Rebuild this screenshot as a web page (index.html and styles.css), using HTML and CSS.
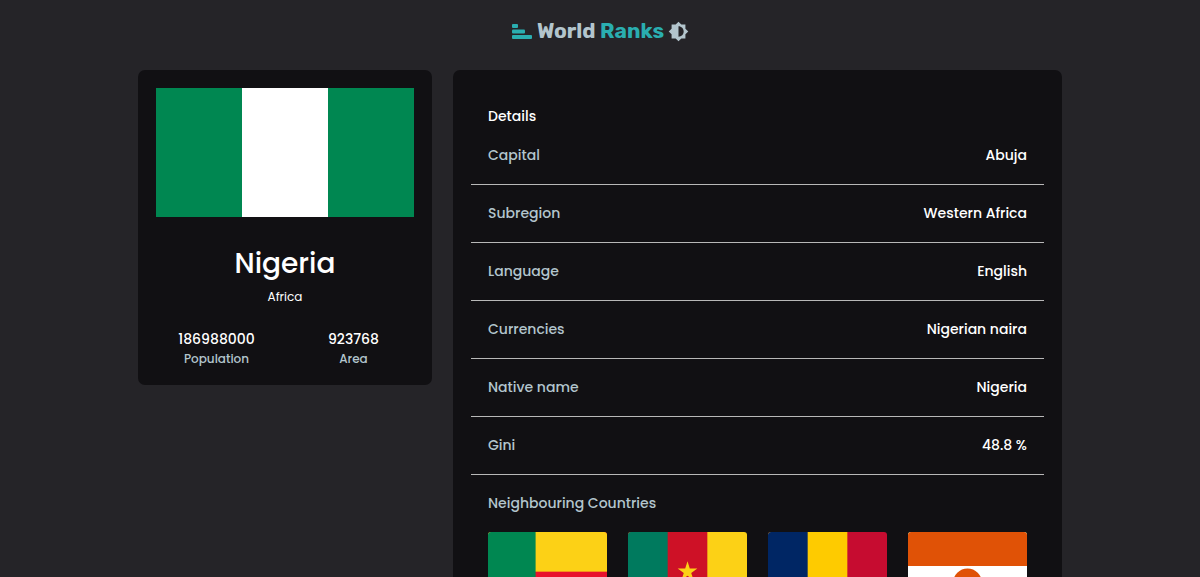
FILE: index.html
```html
<!DOCTYPE html>
<html lang="en">
<head>
<meta charset="utf-8">
<meta name="viewport" content="width=device-width, initial-scale=1">
<title>World Ranks - Nigeria</title>
<link rel="stylesheet" href="styles.css">
</head>
<body>
<header class="header">
  <a class="brand" href="#">
    <svg class="brand-icon" viewBox="0 0 20 15" aria-hidden="true"><rect width="6" height="4" rx="1"/><rect y="5.5" width="13" height="4" rx="1"/><rect y="11" width="20" height="4" rx="1"/></svg>
    <span class="brand-name">World <span class="brand-accent">Ranks</span></span>
  </a>
  <button class="theme-toggle" type="button" aria-label="Toggle theme">
    <svg viewBox="1 1 22 22" aria-hidden="true"><path d="M20 15.31L23.31 12 20 8.69V4h-4.69L12 .69 8.69 4H4v4.69L.69 12 4 15.31V20h4.69L12 23.31 15.31 20H20v-4.69zM12 18V6c3.31 0 6 2.69 6 6s-2.69 6-6 6z"/></svg>
  </button>
</header>
<main class="layout">
  <section class="card overview">
    <svg class="flag" viewBox="0 0 6 3" role="img" aria-label="Flag of Nigeria"><rect width="6" height="3" fill="#008751"/><rect x="2" width="2" height="3" fill="#fff"/></svg>
    <h1 class="country">Nigeria</h1>
    <p class="region">Africa</p>
    <dl class="stats">
      <div class="stat"><dd class="stat-value">186988000</dd><dt class="stat-label">Population</dt></div>
      <div class="stat"><dd class="stat-value">923768</dd><dt class="stat-label">Area</dt></div>
    </dl>
  </section>
  <section class="card details">
    <h2 class="details-title">Details</h2>
    <dl class="rows">
      <div class="row"><dt>Capital</dt><dd>Abuja</dd></div>
      <div class="row"><dt>Subregion</dt><dd>Western Africa</dd></div>
      <div class="row"><dt>Language</dt><dd>English</dd></div>
      <div class="row"><dt>Currencies</dt><dd>Nigerian naira</dd></div>
      <div class="row"><dt>Native name</dt><dd>Nigeria</dd></div>
      <div class="row"><dt>Gini</dt><dd>48.8 %</dd></div>
    </dl>
    <div class="neighbours">
      <h3 class="neighbours-title">Neighbouring Countries</h3>
      <div class="neighbour-grid">
        <svg class="neighbour-flag" viewBox="0 0 150 100" role="img" aria-label="Flag of Benin"><rect width="150" height="100" fill="#e8112d"/><rect width="150" height="50" fill="#fcd116"/><rect width="60" height="100" fill="#008751"/></svg>
        <svg class="neighbour-flag" viewBox="0 0 150 100" role="img" aria-label="Flag of Cameroon"><rect width="150" height="100" fill="#fcd116"/><rect width="100" height="100" fill="#ce1126"/><rect width="50" height="100" fill="#007a5e"/><path fill="#fcd116" d="M75 37l2.900 9h9.500l-7.700 5.600 2.900 9-7.600-5.600-7.600 5.600 2.900-9-7.700-5.600h9.500z"/></svg>
        <svg class="neighbour-flag" viewBox="0 0 150 100" role="img" aria-label="Flag of Chad"><rect width="150" height="100" fill="#c60c30"/><rect width="100" height="100" fill="#fecb00"/><rect width="50" height="100" fill="#002664"/></svg>
        <svg class="neighbour-flag" viewBox="0 0 70 60" role="img" aria-label="Flag of Niger"><rect width="70" height="60" fill="#0db02b"/><rect width="70" height="40" fill="#fff"/><rect width="70" height="20" fill="#e05206"/><circle cx="35" cy="30" r="8.500" fill="#e05206"/></svg>
      </div>
    </div>
  </section>
</main>
</body>
</html>
```
FILE: styles.css
```css
* {
  box-sizing: border-box;
  margin: 0;
}

body {
  background: #252428;
  color: #fff;
  font-family: Poppins, Inter, "Open Sans", sans-serif;
  font-size: 14px;
  font-weight: 500;
  line-height: 21px;
}

.header {
  display: flex;
  align-items: center;
  justify-content: center;
  gap: 5px;
  padding: 19px 16px 20px;
}

.brand {
  display: flex;
  align-items: center;
  gap: 5px;
  color: #b3c5cd;
  text-decoration: none;
}

.brand-icon {
  width: 20px;
  height: 15px;
  fill: #2aaeb0;
}

.brand-name {
  font-family: Rubik, Inter, sans-serif;
  font-size: 21px;
  font-weight: 700;
  line-height: 24px;
}

.brand-accent {
  color: #2aaeb0;
}

.theme-toggle {
  display: flex;
  padding: 0;
  border: 0;
  background: none;
  cursor: pointer;
}

.theme-toggle svg {
  width: 19px;
  height: 19px;
  overflow: visible;
  fill: #b3c5cd;
}

.layout {
  display: grid;
  grid-template-columns: repeat(12, 1fr);
  gap: 21px;
  align-items: start;
  width: 77%;
  margin: 7px auto 32px;
}

.card {
  border-radius: 7px;
  background: #111013;
}

.overview {
  grid-column: span 4;
  padding: 18px 18px 16px;
  text-align: center;
}

.flag {
  display: block;
  width: 100%;
}

.country {
  margin-top: 29px;
  font-size: 28px;
  font-weight: 500;
  line-height: 36px;
}

.region {
  margin-top: 5px;
  font-size: 12px;
  font-weight: 400;
  line-height: 20px;
}

.stats {
  display: grid;
  grid-template-columns: 1fr 1fr;
  gap: 16px;
  margin-top: 22px;
}

.stat-value {
  line-height: 20px;
}

.stat-label {
  color: #b3c5cd;
  font-size: 12px;
  line-height: 20px;
}

.details {
  grid-column: span 8;
  padding: 18px;
}

.details-title {
  padding: 18px 17px 0;
  font-size: 14px;
  font-weight: 500;
}

.row {
  display: flex;
  justify-content: space-between;
  gap: 16px;
  padding: 18px 17px;
  border-bottom: 1px solid #b8b8b8;
}

.row dt,
.neighbours-title {
  color: #b3c5cd;
}

.row dd {
  text-align: right;
}

.neighbours {
  padding: 18px 17px;
}

.neighbours-title {
  font-size: 14px;
  font-weight: 500;
}

.neighbour-grid {
  display: grid;
  grid-template-columns: repeat(4, 1fr);
  gap: 21px;
  align-items: start;
  margin-top: 18px;
}

.neighbour-flag {
  display: block;
  width: 100%;
  border-radius: 3px;
}

@media (max-width: 760px) {
  .overview,
  .details {
    grid-column: 1 / -1;
  }
}
```
